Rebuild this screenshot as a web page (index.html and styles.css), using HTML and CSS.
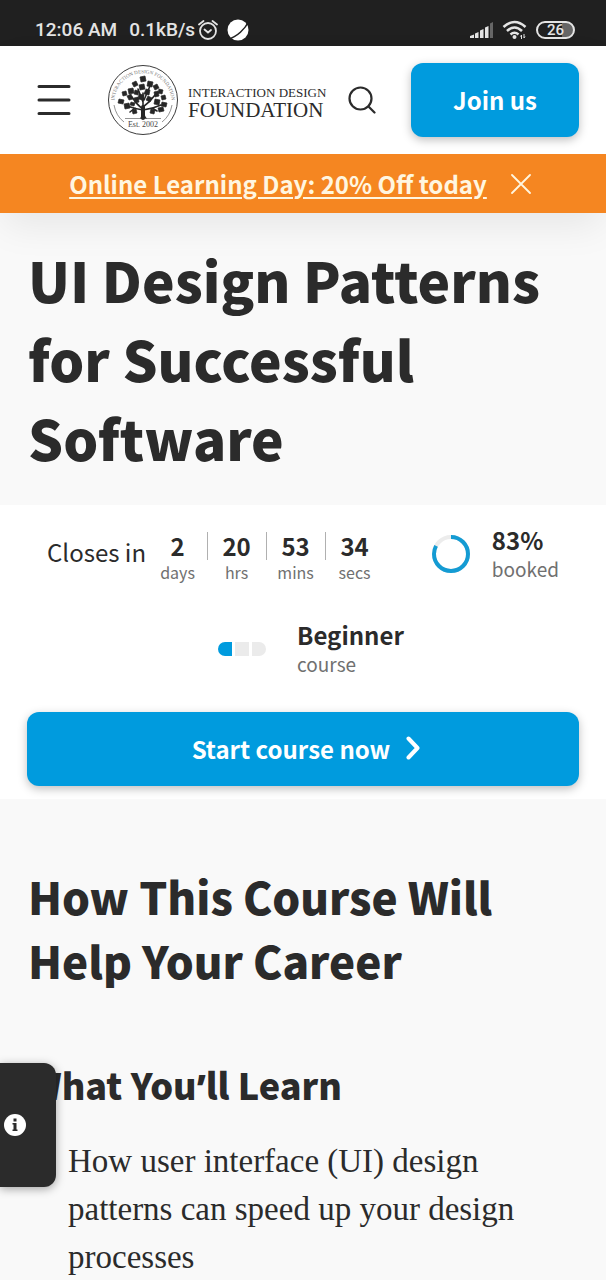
FILE: index.html
```html
<!DOCTYPE html>
<html lang="en">
<head>
<meta charset="utf-8">
<meta name="viewport" content="width=device-width, initial-scale=1">
<title>UI Design Patterns for Successful Software</title>
<link rel="stylesheet" href="styles.css">
</head>
<body>
<div class="status">
  <div class="status-group">
    <span>12:06 AM</span>
    <span class="status-rate">0.1kB/s</span>
    <svg class="status-alarm" width="20" height="22" viewBox="0 0 20 22" fill="none" stroke="#e4e4e4" stroke-width="1.8" stroke-linecap="round"><circle cx="10" cy="12" r="8"/><path d="M1 5.500 5.500 2M19 5.500 14.500 2M6.500 10.500 10 13.500 13 11"/></svg>
    <svg width="24" height="24" viewBox="0 0 24 24"><circle cx="12" cy="12" r="10.500" fill="#fff"/><path d="M2 21C11 19 19 11 23 3" fill="none" stroke="#202020" stroke-width="1.600"/></svg>
  </div>
  <div class="status-group status-right">
    <svg width="24" height="18" viewBox="0 0 24 18" fill="#e4e4e4"><path d="M0 17v-2l4-1.500V17zM5 12.500l3.500-1.500v6H5zM10 9.500 13.500 8v9H10zM15 6.500l3.500-1.500v12H15z"/><path d="M20 2.500 23 1v16h-3z" fill="#666"/></svg>
    <svg width="26" height="20" viewBox="0 0 26 20" fill="none" stroke="#e4e4e4" stroke-width="2.600"><path d="M1.500 7Q12.500-3 23.500 7M5 11Q12.500 4 20 11M8.500 14.500Q12.500 11 16.500 14.500"/><circle cx="12.500" cy="17" r="2" fill="#e4e4e4" stroke="none"/><path d="M19.500 19v-4l-1 1.500M22 14v4l1-1.500" stroke-width="1"/></svg>
    <span class="battery">26</span>
  </div>
</div>

<header class="top">
  <div class="nav">
    <button class="icon-btn" aria-label="Menu"><svg width="34" height="32" viewBox="0 0 34 32" stroke="#2b2b2b" stroke-width="3" stroke-linecap="round"><path d="M2 2.500h30M2 16h30M2 29.500h30"/></svg></button>
    <a class="brand" href="#">
      <svg width="72" height="72" viewBox="0 0 72 72">
        <defs><path id="ring" d="M8 43A28.500 28.500 0 1 1 64 43"/></defs>
        <circle cx="36" cy="36" r="34.500" fill="none" stroke="#3c3c3c" stroke-width="1"/>
        <text class="seal-ring"><textPath href="#ring" startOffset="50%" text-anchor="middle">INTERACTION DESIGN FOUNDATION</textPath></text>
        <path d="M7 41Q9 52 17 58M65 41Q63 52 55 58M18 54.500h36" fill="none" stroke="#777" stroke-width=".8"/>
        <g fill="none" stroke="#262626" stroke-linecap="round"><path d="M36 54V29M36 46Q29 45 20 42M36 45Q30 41 25 33M36 46Q45 45 54 41M36 43Q43 38 48 31M36 38 31 25M37 36 43 22M28 44 23 48M45 44 50 47" stroke-width="1.600"/><path d="M36 54V43" stroke-width="4"/></g>
        <path d="M33 54.500Q35 52 34.500 46L37.500 46Q37 52 40 54.500z" fill="#262626"/>
        <g fill="#262626" stroke="#262626" stroke-width=".7">
          <path d="m33 13 5-1 1 5-5 1zM25 19l4-2 2 4-4 2zM41 17l5 1-1 5-5-1zM32 21l5-1 1 5-5 1zM21 25l5-1 1 5-5 1zM46 22l4-2 2 4-4 2zM39 25l4 1-1 5-5-1zM28 26l4 1-1 4-4-1zM15 28l4-1 1 4-4 1zM52 25l4 1-1 4-4-1zM20 32l4-2 2 5-4 1zM47 28l4-1 1 5-4 1zM32 30l5 1-1 5-5-1zM54 32l4-1 1 4-4 1zM12 35l5 1-1 4-5-1zM27 34l4-1 1 5-4 1zM41 32l4 2-2 4-4-2zM48 35l5 1-1 5-5-1zM17 40l5-1 1 5-5 1zM55 38l5 1-1 4-5-1zM24 38l4 1-1 3-4-1zM51 44l5-1 1 4-5 1zM25 46l4-1 1 4-4 1zM44 45l4 1-1 4-4-1z"/>
        </g>
        <text class="seal-est" x="36" y="63" text-anchor="middle">Est. 2002</text>
      </svg>
      <span class="brand-text"><span class="brand-small">INTERACTION DESIGN</span><span class="brand-large">FOUNDATION</span></span>
    </a>
    <button class="icon-btn search" aria-label="Search"><svg width="28" height="28" viewBox="0 0 28 28" fill="none" stroke="#2b2b2b" stroke-width="2.200" stroke-linecap="round"><circle cx="12.500" cy="12.500" r="11"/><path d="m20.500 20.500 6 6"/></svg></button>
    <button class="btn join">Join us</button>
  </div>
  <div class="banner">
    <a href="#">Online Learning Day: 20% Off today</a>
    <button class="icon-btn" aria-label="Close"><svg width="20" height="20" viewBox="0 0 20 20" stroke="#fff6e0" stroke-width="1.800" stroke-linecap="round"><path d="m1 1 18 18M19 1 1 19"/></svg></button>
  </div>
</header>

<main>
  <section class="hero"><h1>UI Design Patterns for Successful Software</h1></section>
  <section class="summary">
    <div class="facts">
      <div class="closing">
        <span class="closes">Closes in</span>
        <div class="timer">
          <div class="unit"><b>2</b><span>days</span></div>
          <div class="unit"><b>20</b><span>hrs</span></div>
          <div class="unit"><b>53</b><span>mins</span></div>
          <div class="unit"><b>34</b><span>secs</span></div>
        </div>
      </div>
      <div class="fact">
        <svg width="38" height="38" viewBox="0 0 38 38" fill="none" stroke-width="4"><circle cx="19" cy="19" r="17" stroke="#ececec"/><circle cx="19" cy="19" r="17" stroke="#149bd3" pathLength="100" stroke-dasharray="83 17" transform="rotate(-90 19 19)"/></svg>
        <div class="fact-text"><b>83%</b><span>booked</span></div>
      </div>
    </div>
    <div class="fact level">
      <div class="meter"><i class="on"></i><i></i><i></i></div>
      <div class="fact-text"><b>Beginner</b><span>course</span></div>
    </div>
    <button class="btn start">Start course now <svg width="14" height="24" viewBox="0 0 14 24" fill="none" stroke="#fff" stroke-width="4" stroke-linecap="round" stroke-linejoin="round"><path d="m2.500 2.500 9 9.500-9 9.500"/></svg></button>
  </section>
  <section class="career">
    <h2>How This Course Will Help Your Career</h2>
    <h3>What You<span class="quote">’</span>ll Learn</h3>
    <p>How user interface (UI) design patterns can speed up your design processes</p>
  </section>
</main>

<button class="info-tab" aria-label="Information"><svg width="22" height="22" viewBox="0 0 22 22"><circle cx="11" cy="11" r="11" fill="#fff"/><path d="M9.500 4.500h3v3h-3zM8.500 9h4v6.500h1V17h-5v-1.500h1v-5h-1z" fill="#2b2b2b"/></svg></button>
</body>
</html>
```
FILE: styles.css
```css
* { box-sizing: border-box; }
body {
  margin: 0;
  background: #f9f9f9;
  color: #2b2b2b;
  font-family: "Noto Sans CJK SC", "Noto Sans", sans-serif;
}
button { border: 0; margin: 0; padding: 0; background: none; font: inherit; color: inherit; cursor: pointer; }
svg { display: block; flex: none; }
h1, h2, h3, p { margin: 0; }
h1, h2, h3 { font-weight: 900; }

.status {
  display: flex;
  justify-content: space-between;
  align-items: center;
  height: 46px;
  padding: 13px 31px 0 35px;
  background: #202020;
  color: #e4e4e4;
  font: 500 19px/24px Roboto, sans-serif;
}
.status-group { display: flex; align-items: center; }
.status-rate { margin: 0 3px 0 12px; }
.status-alarm { margin-right: 8px; }
.status-right { gap: 8px; }
.battery {
  width: 39px;
  height: 18px;
  border: 2px solid #e4e4e4;
  border-radius: 9px;
  background: linear-gradient(90deg, transparent 70%, #666 70%);
  font-size: 15px;
  line-height: 14px;
  text-align: center;
}

.top { position: relative; background: #fff; box-shadow: 0 16px 36px -4px rgba(0, 0, 0, .08); }
.nav { display: flex; align-items: center; height: 108px; padding: 0 27px 0 37px; }
.brand { display: flex; align-items: center; gap: 9px; margin-left: 36px; color: #2b2b2b; text-decoration: none; }
.brand-text { display: flex; flex-direction: column; padding-top: 4px; font-family: "Liberation Serif", serif; white-space: nowrap; }
.brand-small { font-size: 13px; line-height: 15px; }
.brand-large { font-size: 21px; line-height: 20px; }
.seal-ring { font: 5px "Liberation Serif", serif; fill: #777; }
.seal-est { font: 8px "Liberation Serif", serif; fill: #444; }
.search { margin-left: 22px; }

.btn {
  height: 74px;
  padding-bottom: 2px;
  border-radius: 12px;
  background: #009bde;
  box-shadow: 0 3px 10px rgba(0, 0, 0, .25);
  color: #fff;
  font-size: 24px;
  font-weight: 700;
}
.join { width: 168px; margin-left: auto; }

.banner {
  display: flex;
  justify-content: center;
  align-items: center;
  gap: 24px;
  height: 59px;
  padding-right: 6px;
  background: #f58621;
}
.banner a { color: #fff6e0; font-size: 24px; font-weight: 700; text-underline-offset: 3px; text-decoration-thickness: 2px; }

.hero { padding: 27px 28px 28px; }
h1 { font-size: 55px; line-height: 79px; }

.summary { padding: 18px 27px 13px; background: #fff; }
.facts { display: flex; justify-content: space-between; padding: 0 20px; }
.closing { display: flex; align-items: center; gap: 2px; }
.closes { padding-bottom: 4px; font-size: 24px; line-height: 28px; white-space: nowrap; }
.timer { display: flex; padding-top: 9px; }
.unit { position: relative; display: flex; flex-direction: column; align-items: center; width: 59px; }
.unit b { font-size: 24px; line-height: 28px; }
.unit span { color: #707070; font-size: 16px; line-height: 24px; }
.unit + .unit::before { content: ""; position: absolute; left: 0; top: 0; width: 1px; height: 28px; background: #b0b0b0; }
.fact { display: flex; align-items: center; gap: 22px; }
.fact-text { display: flex; flex-direction: column; }
.fact-text b { font-size: 24px; line-height: 29px; }
.fact-text span { color: #707070; font-size: 19px; line-height: 29px; }
.level { justify-content: center; gap: 31px; margin: 36px 0 34px; padding-left: 16px; }
.meter { display: flex; gap: 3px; }
.meter i { width: 14px; height: 14px; background: #ebebeb; }
.meter i:last-child { border-radius: 0 7px 7px 0; }
.meter .on { border-radius: 7px 0 0 7px; background: #009bde; }
.start { display: flex; justify-content: center; align-items: center; gap: 16px; width: 100%; padding-left: 6px; }

.career { padding: 65px 28px 0; }
h2 { font-size: 44px; line-height: 64px; }
h3 { margin-top: 68px; font-size: 36px; line-height: 48px; }
.quote { font-family: "Noto Sans", sans-serif; line-height: 1; }
p { margin-top: 29px; padding: 0 32px 0 40px; font: 33px/48px "Liberation Serif", serif; }

.info-tab {
  position: fixed;
  left: 0;
  bottom: 93px;
  display: flex;
  align-items: center;
  width: 56px;
  height: 124px;
  padding-left: 4px;
  border-radius: 0 12px 12px 0;
  background: #2b2b2b;
  box-shadow: 0 2px 10px rgba(0, 0, 0, .35);
}
```
